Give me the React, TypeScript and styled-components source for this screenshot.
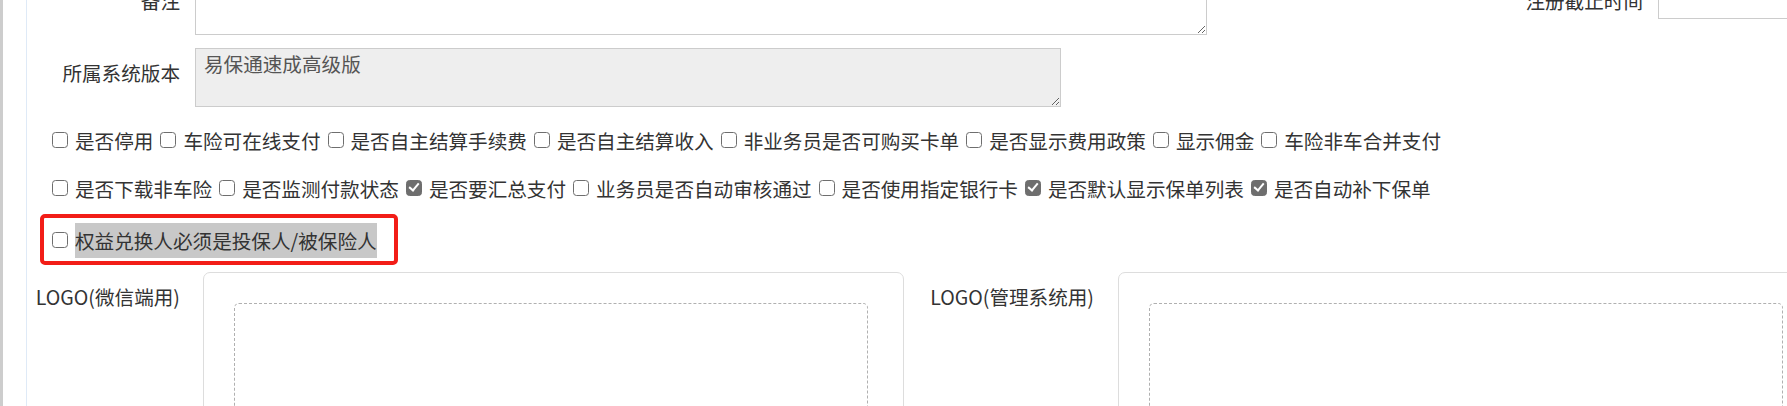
import React from "react";
import styled, { createGlobalStyle } from "styled-components";

const GlobalStyle = createGlobalStyle`
  html, body {
    margin: 0;
    padding: 0;
    background: #fff;
  }
  body {
    font-family: "Noto Sans CJK SC", "Noto Sans", sans-serif;
    color: #333;
    overflow: hidden;
  }
`;

const rowOne = [
  { text: "是否停用", checked: false },
  { text: "车险可在线支付", checked: false },
  { text: "是否自主结算手续费", checked: false },
  { text: "是否自主结算收入", checked: false },
  { text: "非业务员是否可购买卡单", checked: false },
  { text: "是否显示费用政策", checked: false },
  { text: "显示佣金", checked: false },
  { text: "车险非车合并支付", checked: false },
];

const rowTwo = [
  { text: "是否下载非车险", checked: false },
  { text: "是否监测付款状态", checked: false },
  { text: "是否要汇总支付", checked: true },
  { text: "业务员是否自动审核通过", checked: false },
  { text: "是否使用指定银行卡", checked: false },
  { text: "是否默认显示保单列表", checked: true },
  { text: "是否自动补下保单", checked: true },
];

const App: React.FC = () => {
  return (
    <>
      <GlobalStyle />
      <Shell>
        <SideEdge />
        <Gutter />
        <Panel>
          <Content>
            <FieldRow $top={0}>
              <Label $width={168} $gap={15}>备注</Label>
              <TextArea $width={1012} defaultValue="" />
              <Label $width={451} $gap={15}>注册截止时间</Label>
              <TextInput />
            </FieldRow>

            <FieldRow $top={13}>
              <Label $width={168} $gap={15}>所属系统版本</Label>
              <TextArea $width={866} $disabled readOnly defaultValue="易保通速成高级版" />
            </FieldRow>

            <CheckRow $top={15}>
              {rowOne.map((item) => (
                <CheckItem key={item.text}>
                  <Box type="checkbox" defaultChecked={item.checked} />
                  <span>{item.text}</span>
                </CheckItem>
              ))}
            </CheckRow>

            <CheckRow $top={12}>
              {rowTwo.map((item) => (
                <CheckItem key={item.text}>
                  <Box type="checkbox" defaultChecked={item.checked} />
                  <span>{item.text}</span>
                </CheckItem>
              ))}
            </CheckRow>

            <Marked>
              <CheckItem>
                <Box type="checkbox" />
                <Selected>权益兑换人必须是投保人/被保险人</Selected>
              </CheckItem>
            </Marked>

            <LogoRow>
              <Label $width={176} $gap={23}>LOGO(微信端用)</Label>
              <UploadCard>
                <DropZone />
              </UploadCard>
              <Label $width={214} $gap={24}>LOGO(管理系统用)</Label>
              <UploadCard>
                <DropZone />
              </UploadCard>
            </LogoRow>
          </Content>
        </Panel>
      </Shell>
    </>
  );
};

export default App;

const Shell = styled.div`
  display: flex;
  height: 406px;
  overflow: hidden;
`;

const SideEdge = styled.div`
  width: 3px;
  flex-shrink: 0;
  background: #cdcdcd;
`;

const Gutter = styled.div`
  width: 23px;
  flex-shrink: 0;
`;

const Panel = styled.div`
  flex: 1;
  min-width: 0;
  border-left: 1px solid #dfeaf7;
  overflow: hidden;
`;

const Content = styled.div`
  display: flex;
  flex-direction: column;
  margin-top: -24px;
  font-size: 19.6px;
`;

const FieldRow = styled.div<{ $top: number }>`
  display: flex;
  align-items: flex-start;
  margin-top: ${(p) => p.$top}px;
`;

const Label = styled.label<{ $width: number; $gap: number }>`
  flex-shrink: 0;
  box-sizing: border-box;
  width: ${(p) => p.$width}px;
  padding-right: ${(p) => p.$gap}px;
  padding-top: 10px;
  line-height: 29px;
  text-align: right;
  white-space: nowrap;
  color: #333;
`;

const TextArea = styled.textarea<{ $width: number; $disabled?: boolean }>`
  flex-shrink: 0;
  box-sizing: border-box;
  width: ${(p) => p.$width}px;
  height: 59px;
  margin: 0;
  padding: 2px 8px;
  border: 1px solid #cccccc;
  border-radius: 0;
  background: ${(p) => (p.$disabled ? "#eeeeee" : "#fff")};
  color: #555;
  font-family: inherit;
  font-size: 19.6px;
  line-height: 26px;
  outline: none;
`;

const TextInput = styled.input`
  flex-shrink: 0;
  box-sizing: border-box;
  width: 200px;
  height: 43px;
  margin: 0;
  border: 1px solid #cccccc;
  outline: none;
`;

const CheckRow = styled.div<{ $top: number }>`
  display: flex;
  align-items: center;
  gap: 7px;
  height: 36px;
  margin-top: ${(p) => p.$top}px;
  padding-left: 25px;
  white-space: nowrap;
`;

const CheckItem = styled.label`
  display: inline-flex;
  align-items: center;
  gap: 7px;
  color: #333;
`;

const Box = styled.input`
  -webkit-appearance: none;
  appearance: none;
  position: relative;
  display: block;
  flex: 0 0 16px;
  box-sizing: border-box;
  width: 16px;
  min-width: 16px;
  height: 16px;
  margin: 0;
  border: 1.6px solid #6e6e6e;
  border-radius: 3.5px;
  background: #fff;

  &:checked {
    background: #6e6e6e;
    border-color: #6e6e6e;
  }

  &:checked::after {
    content: "";
    position: absolute;
    left: 4px;
    top: 0px;
    width: 4px;
    height: 8px;
    border-right: 2.5px solid #fff;
    border-bottom: 2.5px solid #fff;
    transform: rotate(40deg);
  }
`;

const Marked = styled.div`
  display: flex;
  align-items: center;
  box-sizing: border-box;
  width: 358px;
  height: 51px;
  margin-top: 8px;
  margin-left: 13px;
  padding: 1px 8px 0;
  border: 4px solid #f21d17;
  border-radius: 5px;
`;

const Selected = styled.span`
  background: #c8c8c8;
  line-height: 35px;
  color: #333;
`;

const LogoRow = styled.div`
  display: flex;
  align-items: flex-start;
  margin-top: 7px;
`;

const UploadCard = styled.div`
  flex-shrink: 0;
  box-sizing: border-box;
  width: 701px;
  height: 200px;
  padding: 30px;
  border: 1px solid #dddddd;
  border-radius: 7px;
`;

const DropZone = styled.div`
  box-sizing: border-box;
  width: 634px;
  height: 160px;
  border: 1px dashed #b0b0b0;
  border-radius: 5px;
`;
